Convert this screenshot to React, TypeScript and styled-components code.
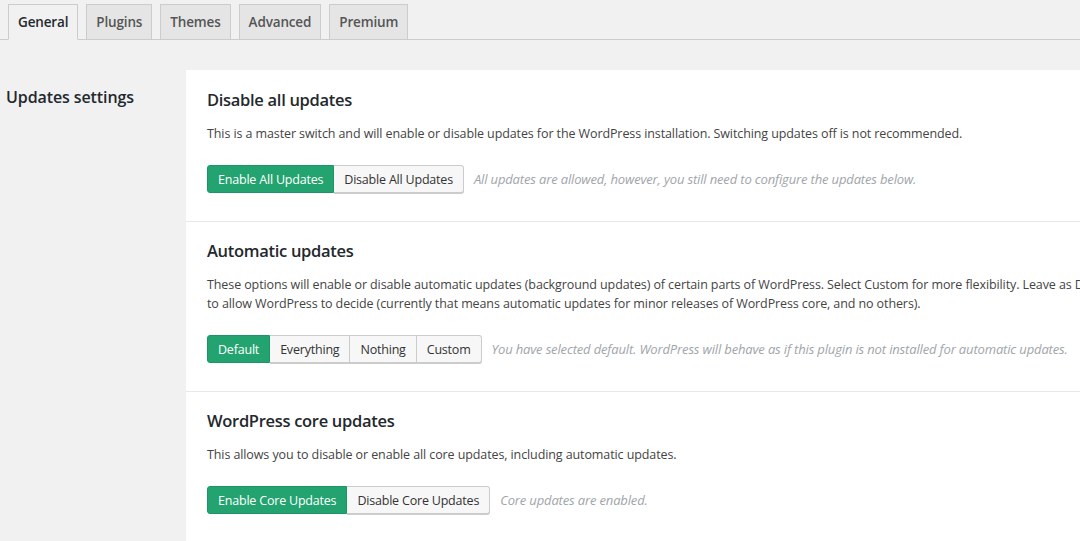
import React, { useState } from "react"
import styled, { createGlobalStyle } from "styled-components"

const GlobalStyle = createGlobalStyle`
	html, body {
		margin: 0;
		padding: 0;
		background: #f1f1f1;
		overflow: hidden;
	}
	body {
		font-family: "Open Sans", "Noto Sans", sans-serif;
		color: #444;
		font-size: 13px;
	}
`

const TabBar = styled.nav`
	display: flex;
	gap: 8px;
	padding: 4px 0 0 8px;
	border-bottom: 1px solid #ccc;
	height: 35px;
	box-sizing: content-box;
`

const Tab = styled.a<{ $active?: boolean }>`
	display: block;
	box-sizing: border-box;
	height: 36px;
	padding: 0 9px;
	line-height: 34px;
	font-size: 13.5px;
	font-weight: 600;
	color: ${( p ) => p.$active ? '#23282d' : '#555'};
	background: ${( p ) => p.$active ? '#f1f1f1' : '#e5e5e5'};
	border: 1px solid #ccc;
	border-bottom-color: ${( p ) => p.$active ? '#f1f1f1' : '#ccc'};
	text-decoration: none;
	cursor: pointer;
	letter-spacing: -0.15px;
`

const Layout = styled.div`
	display: flex;
	margin-top: 30px;
	width: 1400px;
`

const SideLabel = styled.h2`
	flex: 0 0 180px;
	margin: 0;
	padding: 16px 0 0 6px;
	font-size: 16px;
	font-weight: 600;
	color: #23282d;
	letter-spacing: -0.1px;
`

const Panel = styled.div`
	flex: 1;
	background: #fff;
`

const Section = styled.section`
	padding: 18px 21px 28px;
	border-bottom: 1px solid #e8e8e8;

	& + & {
		padding-top: 17px;
	}
`

const Heading = styled.h3`
	margin: 0;
	font-size: 16.5px;
	line-height: 24px;
	font-weight: 600;
	color: #23282d;
	letter-spacing: -0.3px;
`

const Description = styled.p`
	margin: 12px 0 22px;
	font-size: 12.5px;
	line-height: 19px;
	color: #444;
	letter-spacing: -0.1px;
`

const Controls = styled.div`
	display: flex;
	align-items: center;
	height: 28px;
`

const ButtonGroup = styled.div`
	display: flex;
`

const ToggleButton = styled.button<{ $selected?: boolean }>`
	height: 28px;
	padding: 0 10px;
	font-family: inherit;
	font-size: 12.5px;
	letter-spacing: -0.2px;
	color: ${( p ) => p.$selected ? '#fff' : '#333'};
	background: ${( p ) => p.$selected ? '#23a36f' : '#f7f7f7'};
	border: 1px solid ${( p ) => p.$selected ? '#1f9464' : '#ccc'};
	border-left-width: 0;
	border-radius: 0;
	box-shadow: ${( p ) => p.$selected ? 'none' : '0 1px 0 #ccc'};
	cursor: pointer;

	&:first-child {
		border-left-width: 1px;
		border-radius: 3px 0 0 3px;
	}

	&:last-child {
		border-radius: 0 3px 3px 0;
	}
`

const Note = styled.span`
	margin-left: 10px;
	font-style: italic;
	font-size: 13px;
	color: #a0a5aa;
	letter-spacing: -0.15px;
	white-space: nowrap;
`

type Option = { label: string }

const Setting: React.FC<{
	title: string
	description: React.ReactNode
	options: Option[]
	note: string
}> = ({ title, description, options, note }) => {
	const [selected, setSelected] = useState(0)

	return (
		<Section>
			<Heading>{ title }</Heading>
			<Description>{ description }</Description>
			<Controls>
				<ButtonGroup>
					{ options.map( ( option, index ) => (
						<ToggleButton
							key={ index }
							$selected={ index === selected }
							onClick={ () => setSelected( index ) }>
							{ option.label }
						</ToggleButton>
					) ) }
				</ButtonGroup>
				<Note>{ note }</Note>
			</Controls>
		</Section>
	)
}

const tabs = [ 'General', 'Plugins', 'Themes', 'Advanced', 'Premium' ]

const App: React.FC = () => {
	const [activeTab, setActiveTab] = useState( 'General' )

	return (
		<>
			<GlobalStyle />
			<TabBar>
				{ tabs.map( ( tab ) => (
					<Tab key={ tab } $active={ tab === activeTab } onClick={ () => setActiveTab( tab ) }>
						{ tab }
					</Tab>
				) ) }
			</TabBar>

			<Layout>
				<SideLabel>Updates settings</SideLabel>
				<Panel>
					<Setting
						title="Disable all updates"
						description="This is a master switch and will enable or disable updates for the WordPress installation. Switching updates off is not recommended."
						options={ [ { label: 'Enable All Updates' }, { label: 'Disable All Updates' } ] }
						note="All updates are allowed, however, you still need to configure the updates below." />

					<Setting
						title="Automatic updates"
						description={ <>
							These options will enable or disable automatic updates (background updates) of certain parts of WordPress. Select Custom for more flexibility. Leave as Default<br />
							to allow WordPress to decide (currently that means automatic updates for minor releases of WordPress core, and no others).
						</> }
						options={ [ { label: 'Default' }, { label: 'Everything' }, { label: 'Nothing' }, { label: 'Custom' } ] }
						note="You have selected default. WordPress will behave as if this plugin is not installed for automatic updates." />

					<Setting
						title="WordPress core updates"
						description="This allows you to disable or enable all core updates, including automatic updates."
						options={ [ { label: 'Enable Core Updates' }, { label: 'Disable Core Updates' } ] }
						note="Core updates are enabled." />
				</Panel>
			</Layout>
		</>
	)
}

export default App
